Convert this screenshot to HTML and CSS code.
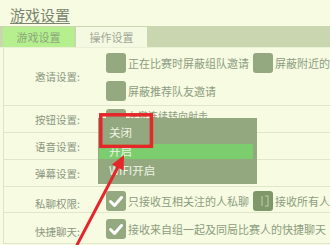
FILE: index.html
```html
<!DOCTYPE html>
<html lang="zh">
<head>
<meta charset="utf-8">
<link rel="stylesheet" href="styles.css">
</head>
<body>
<div class="page">
  <div class="title">游戏设置</div>
  <div class="tabs">
    <div class="tab active">游戏设置</div>
    <div class="tab">操作设置</div>
  </div>
  <div class="content">
    <div class="row row-invite">
      <div class="label">邀请设置:</div>
      <div class="options">
        <div class="line">
          <div class="opt"><span class="box"></span><span class="txt">正在比赛时屏蔽组队邀请</span></div>
          <div class="opt"><span class="box"></span><span class="txt">屏蔽附近的人邀请</span></div>
        </div>
        <div class="line">
          <div class="opt"><span class="box"></span><span class="txt">屏蔽推荐队友邀请</span></div>
        </div>
      </div>
    </div>
    <div class="row row-btn">
      <div class="label">按钮设置:</div>
      <div class="options">
        <div class="line">
          <div class="opt"><span class="box"></span><span class="txt small">左键连续转向射击</span></div>
        </div>
      </div>
    </div>
    <div class="row row-s">
      <div class="label">语音设置:</div>
      <div class="options"></div>
    </div>
    <div class="row row-s">
      <div class="label">弹幕设置:</div>
      <div class="options"></div>
    </div>
    <div class="row row-chat">
      <div class="label">私聊权限:</div>
      <div class="options">
        <div class="line">
          <div class="opt"><span class="box checked"><svg viewBox="0 0 20 20"><path d="M4.5 10.5 L8.5 14.5 L15.5 6.5" fill="none" stroke="#fff" stroke-width="3" stroke-linecap="round" stroke-linejoin="round"/></svg></span><span class="txt">只接收互相关注的人私聊</span></div>
          <div class="opt"><span class="box dark"><svg viewBox="0 0 20 20"><path d="M9 5 L9 15 M12 5 L15 5 L15 15 L12 15" fill="none" stroke="#a9bb98" stroke-width="1.6"/></svg></span><span class="txt">接收所有人</span></div>
        </div>
      </div>
    </div>
    <div class="row row-quick">
      <div class="label">快捷聊天:</div>
      <div class="options">
        <div class="line">
          <div class="opt"><span class="box checked"><svg viewBox="0 0 20 20"><path d="M4.5 10.5 L8.5 14.5 L15.5 6.5" fill="none" stroke="#fff" stroke-width="3" stroke-linecap="round" stroke-linejoin="round"/></svg></span><span class="txt">接收来自组一起及同局比赛人的快捷聊天</span></div>
        </div>
      </div>
    </div>
  </div>

  <div class="dropdown">
    <div class="item">关闭</div>
    <div class="item hl">开启</div>
    <div class="item">WIFI开启</div>
  </div>

  <svg class="overlay" viewBox="0 0 330 245" width="330" height="245">
    <rect x="100.8" y="114.8" width="50.6" height="31.5" fill="none" stroke="#e5262b" stroke-width="3.5"/>
    <line x1="77" y1="245" x2="118.5" y2="166" stroke="#e5262b" stroke-width="3" stroke-linecap="round"/>
    <polygon points="124,155 123.6,170.5 112,164.5" fill="#e5262b"/>
  </svg>
</div>
</body>
</html>
```
FILE: styles.css
```css
html, body {
  margin: 0;
  padding: 0;
}
body {
  background: #f6fbe1;
  font-family: "Noto Sans CJK SC", "Noto Sans", sans-serif;
  width: 330px;
  height: 245px;
  overflow: hidden;
}
.page {
  position: relative;
  width: 330px;
  height: 245px;
  overflow: hidden;
}
.title {
  padding: 6px 0 0 10px;
  height: 20px;
  font-size: 15px;
  line-height: 18px;
  color: #7a8472;
  text-decoration: underline;
  text-underline-offset: 2px;
  text-decoration-thickness: 1px;
}
.tabs {
  display: flex;
  gap: 2px;
  height: 20px;
  padding: 1px 0 0 3px;
  background: #c9d6af;
  border-bottom: 1px solid #e9f0d3;
}
.tab {
  width: 71px;
  height: 20px;
  line-height: 20px;
  text-align: center;
  font-size: 11px;
  color: #a0a696;
  background: #f4f9e1;
}
.tab.active {
  background: #b6ef8e;
  color: #8aa77a;
}
.content {
  margin-left: 3px;
  border-left: 1px solid #dde5c6;
}
.row {
  display: flex;
  align-items: center;
  border-bottom: 1px solid #dfe6c9;
  box-sizing: border-box;
}
.row-invite { height: 58px; }
.row-btn { height: 27px; }
.row-s { height: 27px; }
.row-chat { height: 26px; align-items: flex-end; padding-bottom: 1px; }
.row-quick { height: 31px; align-items: flex-start; padding-top: 6px; }
.label {
  flex: none;
  width: 76px;
  text-align: right;
  font-size: 10.5px;
  color: #8c9681;
  white-space: nowrap;
}
.row-quick .label { padding-top: 5px; }
.options {
  flex: none;
  padding-left: 26px;
  display: flex;
  flex-direction: column;
  gap: 8px;
}
.line {
  display: flex;
  gap: 4px;
  white-space: nowrap;
}
.opt {
  flex: none;
  display: flex;
  align-items: center;
  gap: 2px;
}
.box {
  width: 20px;
  height: 20px;
  border-radius: 3px;
  background: #94a97f;
  flex: none;
}
.box svg {
  display: block;
  width: 20px;
  height: 20px;
}
.box.dark {
  background: #7f9869;
}
.txt {
  font-size: 11px;
  color: #8d9c80;
}
.txt.small {
  font-size: 10px;
  position: relative;
  top: -4px;
}
.dropdown {
  position: absolute;
  left: 98px;
  top: 118px;
  width: 159px;
  height: 66px;
  box-sizing: border-box;
  padding: 5px 4px 3px 1px;
  background: #93a87e;
}
.item {
  height: 19px;
  line-height: 19px;
  padding-left: 10px;
  font-size: 11.5px;
  color: #eef4e4;
}
.item.hl {
  background: #7ccd6e;
  height: 15px;
  line-height: 15px;
  margin: 2px 0;
}
.overlay {
  position: absolute;
  left: 0;
  top: 0;
  pointer-events: none;
}
```
